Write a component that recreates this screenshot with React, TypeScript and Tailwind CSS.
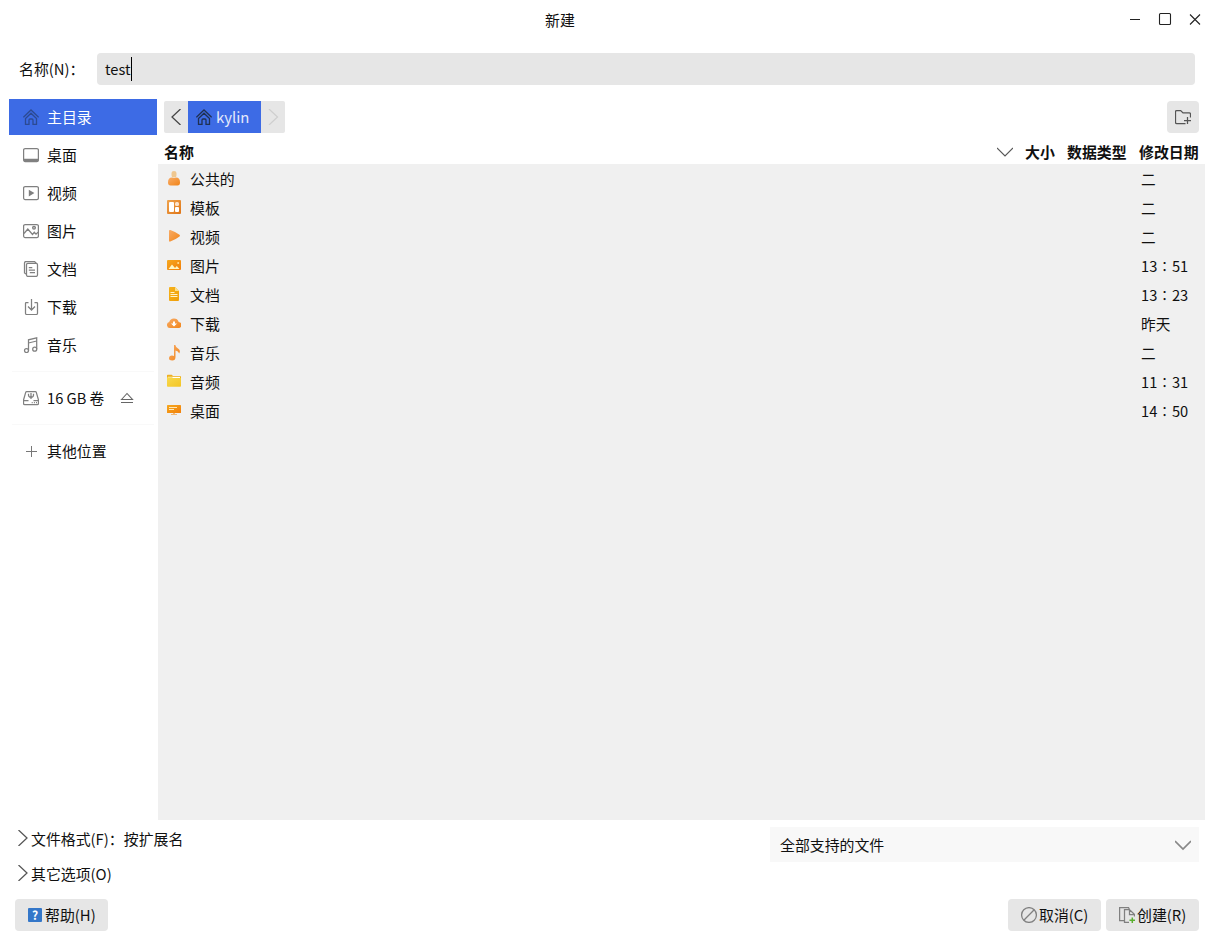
import type { ReactNode } from "react";

function Icon({ children, weight = 1.25 }: { children: ReactNode; weight?: number }) {
  return (
    <svg
      width="16"
      height="16"
      viewBox="0 0 16 16"
      className="block shrink-0"
      fill="none"
      stroke="currentColor"
      strokeWidth={weight}
    >
      {children}
    </svg>
  );
}

const HomeIcon = () => (
  <Icon weight={1.3}>
    <path d="M.4 8.300 8 1l7.600 7.300" />
    <path d="M2.500 9.500v6h3.500v-4.500q0-1 1-1h2q1 0 1 1v4.500h3.500v-6L8 4.200z" />
  </Icon>
);

const places: { name: string; icon: ReactNode }[] = [
  { name: "主目录", icon: <HomeIcon /> },
  {
    name: "桌面",
    icon: (
      <Icon>
        <rect x=".6" y="1.500" width="14.800" height="13" rx="1.500" />
        <path d="M1 11.800h14v1.700q0 1-1 1H2q-1 0-1-1z" fill="currentColor" stroke="none" />
      </Icon>
    ),
  },
  {
    name: "视频",
    icon: (
      <Icon>
        <rect x=".6" y="1.500" width="14.800" height="13" rx="1.500" />
        <path d="M5.800 4.700v6.800l5.600-3.400z" fill="currentColor" stroke="none" />
      </Icon>
    ),
  },
  {
    name: "图片",
    icon: (
      <Icon>
        <rect x=".6" y="1.500" width="14.800" height="13" rx="1.500" />
        <circle cx="11" cy="4.800" r="1.400" fill="currentColor" fillOpacity=".4" />
        <path d="M1 10.500 4.800 6l4.700 5.500 1.800-2.200 1.700 1.900 2-2" />
      </Icon>
    ),
  },
  {
    name: "文档",
    icon: (
      <Icon>
        <path d="M3.500 13.200 1.500 12V2q0-1.500 1.500-1.500h8.500l1.700 1.700" />
        <rect x="3.500" y="2.400" width="11" height="13" rx="1.300" />
        <path d="M5.800 6.500h3.500M5.800 9h6.200M6.800 11.500H12" />
      </Icon>
    ),
  },
  {
    name: "下载",
    icon: (
      <Icon>
        <path d="M5.500 3.500H3.200q-.7 0-.7.700v10.100q0 1.200 1.200 1.200h9.600q1.200 0 1.200-1.200V4.200q0-.7-.7-.7h-2.300M8.500 0v11M5 7.500l3.500 3.500L12 7.500" />
      </Icon>
    ),
  },
  {
    name: "音乐",
    icon: (
      <Icon>
        <circle cx="3.500" cy="13.500" r="2" />
        <circle cx="11.700" cy="12.200" r="2" />
        <path d="M5.500 13.500V2.800l8.200-2v11.400M5.500 6l8.200-2" />
      </Icon>
    ),
  },
];

const files: { name: string; date: string; icon: ReactNode }[] = [
  {
    name: "公共的",
    date: "二",
    icon: (
      <>
        <path d="M4.500 2q0-2 2.500-2t2.500 2v2q0 1-.8 2.500H5.300Q4.500 5 4.500 4z" fill="#efc78f" />
        <path d="M1 11.500Q1 6.500 5 6.500q2 1 4 0 4 0 4 5 0 3-2.500 3h-7Q1 14.500 1 11.500z" fill="url(#warm)" />
      </>
    ),
  },
  {
    name: "模板",
    date: "二",
    icon: (
      <>
        <rect width="14" height="14" rx="1" fill="url(#deep)" />
        <rect x="2" y="2" width="5" height="10" rx="1" fill="#fff" />
        <rect x="8" y="2" width="4" height="4" rx="1.500" fill="#fce4cd" />
        <rect x="8" y="7" width="4" height="5" rx="1" fill="#fff" />
      </>
    ),
  },
  {
    name: "视频",
    date: "二",
    icon: <path d="M2 2q0-1.500 1.300-1Q9 3 12.500 5.800q1 .9 0 1.800Q9 10.500 3.300 12.500 2 13 2 11.500z" fill="url(#warm)" />,
  },
  {
    name: "图片",
    date: "13∶51",
    icon: (
      <>
        <rect y="2" width="14" height="10" rx="1" fill="url(#amber)" />
        <path d="m1.500 11 3.500-4.500L8 10l1.800-2 2.700 3z" fill="#fff6c4" />
        <circle cx="11.200" cy="5" r="1" fill="#ffe09a" />
      </>
    ),
  },
  {
    name: "文档",
    date: "13∶23",
    icon: (
      <>
        <path d="M2 1q0-1 1-1h5l4 4v9q0 1-1 1H3q-1 0-1-1z" fill="url(#gold)" />
        <path d="M8 0v4h4z" fill="#fbe08a" />
        <path d="M3.500 5.500h4M3.500 7.500h7M3.500 9.500h7" stroke="#fff3c8" strokeWidth="1" />
      </>
    ),
  },
  {
    name: "下载",
    date: "昨天",
    icon: (
      <>
        <path d="M3 12a3 3 0 0 1-.8-5.900A5 5 0 0 1 11.700 5.900a3 3 0 0 1-.7 6.100z" fill="url(#warm)" />
        <path d="M6 5.500h2v2h2L7 10.500 4 7.500h2z" fill="#fff" />
      </>
    ),
  },
  {
    name: "音乐",
    date: "二",
    icon: (
      <path
        d="M7 0h1.300q.4 2.200 2.700 3.500 3 2 1.200 5-.8-2.600-3.700-3V12q0 3.500-3.300 3.500-3.200 0-3.200-2.200 0-2.500 3-2.800 1.200 0 2 .5z"
        fill="url(#warm)"
      />
    ),
  },
  {
    name: "音频",
    date: "11∶31",
    icon: (
      <>
        <path d="M0 1.500q0-.7.700-.7h4L6 2h7q1 0 1 1v6H0z" fill="#eeb020" />
        <path d="M1 2.800h12v3H1z" fill="#fff" />
        <path d="M0 3.300h5l1 .7h8v8q0 .8-.8.8H.8q-.8 0-.8-.8z" fill="url(#folder)" />
      </>
    ),
  },
  {
    name: "桌面",
    date: "14∶50",
    icon: (
      <>
        <rect y="2" width="14" height="8" rx=".6" fill="url(#amber)" />
        <path d="M2 4.500h8M2 6.500h5" stroke="#ffe7b5" />
        <path d="M6 10h2v1h2v1H4v-1h2z" fill="#f0b878" />
      </>
    ),
  },
];

const gradients: [string, string, string][] = [
  ["warm", "#f8ac67", "#f18418"],
  ["deep", "#efa34d", "#df7618"],
  ["amber", "#f5a81f", "#f27f0a"],
  ["gold", "#f6b21d", "#ef9e08"],
  ["folder", "#f8d94d", "#f3c526"],
];

function Gradients() {
  return (
    <svg width="0" height="0" className="absolute">
      <defs>
        {gradients.map(([id, a, b]) => (
          <linearGradient key={id} id={id} x1="0" y1="0" x2="1" y2="1">
            <stop stopColor={a} />
            <stop offset="1" stopColor={b} />
          </linearGradient>
        ))}
      </defs>
    </svg>
  );
}

function Divider() {
  return <div className="my-2 ml-[3px] mr-[3px] h-px bg-[#f9f9f9]" />;
}

function Sidebar() {
  return (
    <nav className="flex w-[148px] shrink-0 flex-col">
      <div className="flex flex-col gap-0.5">
        {places.map((p, i) => (
          <div
            key={p.name}
            className={
              i === 0
                ? "flex h-9 items-center gap-2 bg-[#3d6be5] pl-3.5 text-white"
                : "flex h-9 items-center gap-2 pl-3.5"
            }
          >
            <span className={i === 0 ? "text-[#2c4a92]" : "text-[#808080]"}>{p.icon}</span>
            {p.name}
          </div>
        ))}
      </div>
      <Divider />
      <div className="flex h-9 items-center gap-2 pl-3.5">
        <span className="text-[#808080]">
          <Icon>
            <path d="M3.700 1.500h8.600q.8 0 1 .8L15.500 10v3.300q0 1.200-1.200 1.200H1.700q-1.200 0-1.200-1.200V10l2.200-7.700q.2-.8 1-.8zM.5 10.500h5M10.500 10.500h5" />
            <path d="M8 3v6M5.500 3.800v1.500Q5.500 7 8 7.500M10.500 3.800v1.500Q10.500 7 8 7.500" />
            <path d="M8.700 12.500h1M10.900 12.500h1M13 12.500h1" />
          </Icon>
        </span>
        <span className="w-16 text-[14.667px]">16 GB 卷</span>
        <span className="text-[#666]">
          <Icon weight={1.1}>
            <path d="M2.500 9.500 8 3.500l5.500 6zM2 12.500h12" />
          </Icon>
        </span>
      </div>
      <Divider />
      <div className="flex h-9 items-center gap-2 pl-3.5">
        <span className="text-[#777]">
          <Icon weight={1}>
            <path d="M8.500 3v11M3 8.500h11" />
          </Icon>
        </span>
        其他位置
      </div>
    </nav>
  );
}

function PathBar() {
  return (
    <div className="flex h-8 items-center justify-between px-1.5">
      <div className="flex h-8">
        <div className="flex w-6 items-center justify-center rounded-l-[2px] bg-[#e6e6e6] text-[#444]">
          <Icon>
            <path d="M12.500 0 4 8l8.500 8" />
          </Icon>
        </div>
        <div className="flex w-[73px] items-center bg-[#3d6be5] pl-2 text-[#e3e9fb]">
          <span className="mr-1 text-[#203052]">
            <HomeIcon />
          </span>
          kylin
        </div>
        <div className="flex w-6 items-center justify-center rounded-r-[2px] bg-[#e6e6e6] text-[#cfcfcf]">
          <Icon>
            <path d="m4 0 8.500 8L4 16" />
          </Icon>
        </div>
      </div>
      <div className="flex size-8 items-center justify-center rounded bg-[#e6e6e6] text-[#555]">
        <Icon>
          <path d="M10.500 14.500H1.700q-1.200 0-1.200-1.200V2.700q0-1.200 1.200-1.200h4L8 3.900h6.300q1.200 0 1.200 1.200v3.400M12.500 8v7M9 11.500h7" />
        </Icon>
      </div>
    </div>
  );
}

function FileList() {
  return (
    <div className="flex h-[656px] flex-col bg-[#f0f0f0]">
      {files.map((f) => (
        <div key={f.name} className="flex h-[29px] items-center pl-[9px]">
          <svg width="14" height="16" viewBox="0 0 14 16" fill="none" className="mr-[9px] shrink-0">
            {f.icon}
          </svg>
          <span className="flex-1">{f.name}</span>
          <span className="w-16 text-[14.667px]">{f.date}</span>
        </div>
      ))}
    </div>
  );
}

const button = "flex h-8 w-[93px] items-center rounded bg-[#e6e6e6]";

export default function App() {
  return (
    <div
      lang="zh-CN"
      className="flex h-[946px] w-[1214px] flex-col overflow-hidden bg-white font-['Noto_Sans_CJK_SC',sans-serif] text-[14.9px] leading-5 whitespace-nowrap text-[#101010]"
    >
      <Gradients />
      <header className="flex h-10 shrink-0 items-center pl-[545px] pr-[11px]">
        <span>新建</span>
        <div className="ml-auto flex gap-3.5 pb-0.5 text-[#222]">
          <Icon weight={1}>
            <path d="M3 8.500h10" />
          </Icon>
          <Icon weight={1.1}>
            <rect x="2.500" y="2.500" width="11" height="11" rx="1" />
          </Icon>
          <Icon weight={1.1}>
            <path d="m3 3.500 10 10M13 3.500l-10 10" />
          </Icon>
        </div>
      </header>

      <div className="mt-[13px] flex h-8 shrink-0 items-center px-[19px]">
        <label className="w-[78px]">名称(N)：</label>
        <div className="flex h-8 flex-1 items-center rounded bg-[#e6e6e6] pl-2 text-[14.667px]">
          test
          <span className="h-6 w-px bg-black" />
        </div>
      </div>

      <div className="mt-3.5 flex h-[721px] shrink-0 px-[9px]">
        <Sidebar />
        <main className="ml-px flex flex-1 flex-col pt-0.5">
          <PathBar />
          <div className="flex h-[31px] items-center pl-1.5 pt-[7px] font-bold">
            <span className="flex-1">名称</span>
            <span className="mr-3 text-[#555]">
              <Icon weight={1.1}>
                <path d="m0 4 8 8 8-8" />
              </Icon>
            </span>
            <span className="w-[42px]">大小</span>
            <span className="w-[72px]">数据类型</span>
            <span className="w-[66px]">修改日期</span>
          </div>
          <FileList />
        </main>
      </div>

      <footer className="flex flex-1 flex-col">
        <div className="flex justify-between px-[15px]">
          <div className="flex flex-col pt-px">
            {["文件格式(F)：按扩展名", "其它选项(O)"].map((t) => (
              <div key={t} className="flex h-[35px] items-center">
                <span className="pb-0.5 text-[#555]">
                  <Icon>
                    <path d="M3.500 0 12 8l-8.500 8" />
                  </Icon>
                </span>
                {t}
              </div>
            ))}
          </div>
          <div className="mt-[7px] flex h-[35px] w-[429px] items-center justify-between bg-[#f8f8f8] pl-2.5 pr-2">
            全部支持的文件
            <span className="text-[#888]">
              <Icon weight={1.7}>
                <path d="m0 4 8 8 8-8" />
              </Icon>
            </span>
          </div>
        </div>
        <div className="mt-2 flex px-[15px]">
          <div className={`${button} pl-3`}>
            <span className="mr-[3px] ml-px flex size-3.5 items-center justify-center rounded-[1px] bg-[#3477c9] text-[12px] font-bold text-white">
              ?
            </span>
            帮助(H)
          </div>
          <div className={`${button} ml-auto pl-[13px]`}>
            <span className="mr-0.5 text-[#808080]">
              <Icon>
                <circle cx="8" cy="8" r="7.400" />
                <path d="M2.800 13.200 13.200 2.800" />
              </Icon>
            </span>
            取消(C)
          </div>
          <div className={`${button} ml-[5px] pl-[13px]`}>
            <span className="mr-0.5 text-[#808080]">
              <Icon>
                <path d="M5 13.500H.6V.6h8.900l1 1.900M10 15.400H5.500V2.500h5l5 5v2M10.500 2.500v5h5" />
                <path d="M13.300 10.500v5.500M10.500 13.200H16" stroke="#5ab030" strokeWidth="1.500" />
              </Icon>
            </span>
            创建(R)
          </div>
        </div>
      </footer>
    </div>
  );
}
